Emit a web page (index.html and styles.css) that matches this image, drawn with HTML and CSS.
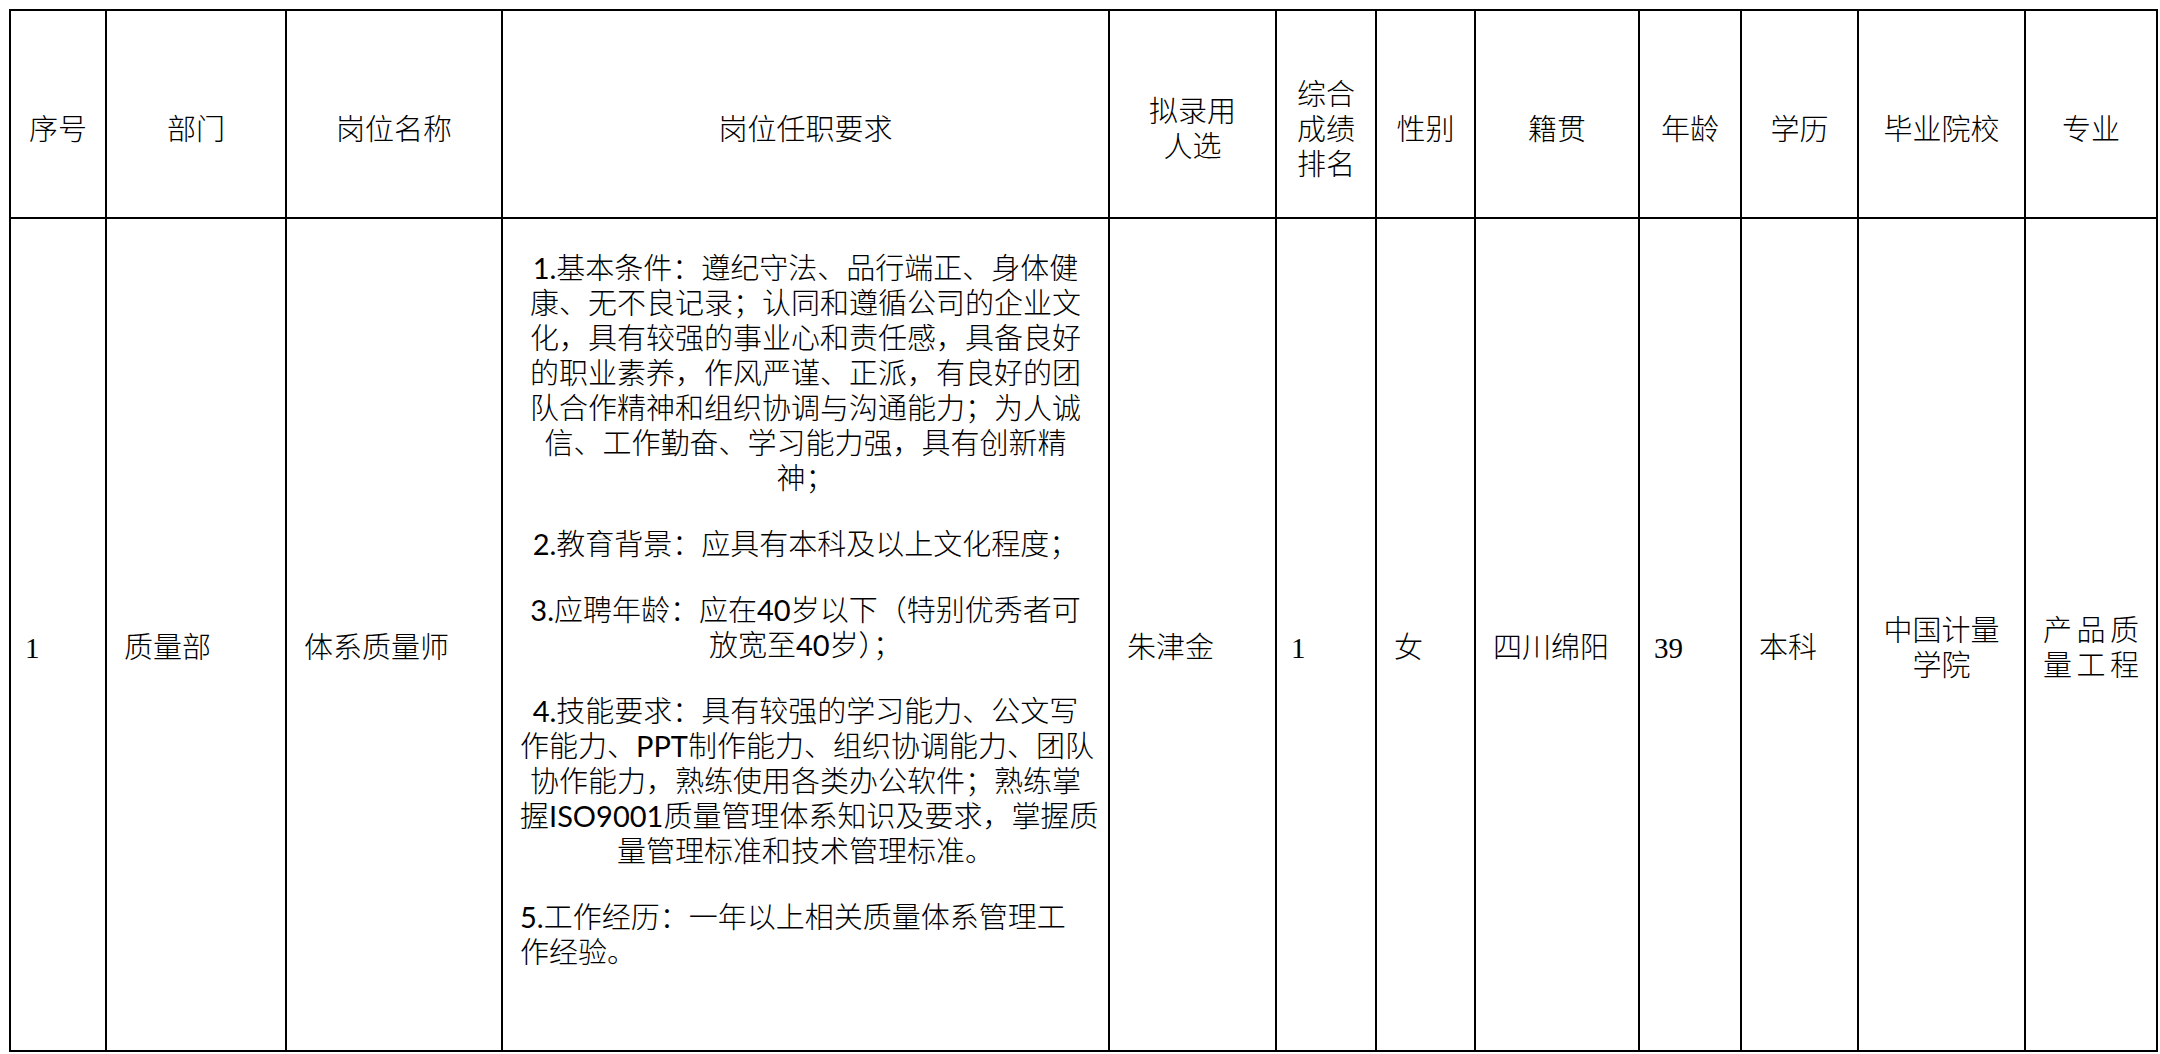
FILE: index.html
```html
<!DOCTYPE html>
<html lang="zh-CN">
<head>
<meta charset="utf-8">
<title>拟录用人员公示</title>
<link rel="stylesheet" href="styles.css">
</head>
<body>
<table class="sheet">
  <colgroup>
    <col class="c-no">
    <col class="c-dept">
    <col class="c-post">
    <col class="c-req">
    <col class="c-name">
    <col class="c-rank">
    <col class="c-sex">
    <col class="c-home">
    <col class="c-age">
    <col class="c-edu">
    <col class="c-school">
    <col class="c-major">
  </colgroup>
  <thead>
    <tr class="head-row">
      <th>序号</th>
      <th>部门</th>
      <th>岗位名称</th>
      <th>岗位任职要求</th>
      <th>拟录用<br>人选</th>
      <th>综合成绩排名</th>
      <th>性别</th>
      <th>籍贯</th>
      <th>年龄</th>
      <th>学历</th>
      <th>毕业院校</th>
      <th>专业</th>
    </tr>
  </thead>
  <tbody>
    <tr class="body-row">
      <td><span class="num">1</span></td>
      <td>质量部</td>
      <td>体系质量师</td>
      <td class="req">
        <p class="para center"><span class="lat">1.</span>基本条件：遵纪守法、品行端正、身体健<br>康、无不良记录；认同和遵循公司的企业文<br>化，具有较强的事业心和责任感，具备良好<br>的职业素养，作风严谨、正派，有良好的团<br>队合作精神和组织协调与沟通能力；为人诚<br>信、工作勤奋、学习能力强，具有创新精<br>神；</p>
        <p class="para center"><span class="lat">2.</span>教育背景：应具有本科及以上文化程度；</p>
        <p class="para center"><span class="lat">3.</span>应聘年龄：应在<span class="lat">40</span>岁以下（特别优秀者可<br>放宽至<span class="lat">40</span>岁）；</p>
        <p class="para center"><span class="lat">4.</span>技能要求：具有较强的学习能力、公文写<br>作能力、<span class="lat">PPT</span>制作能力、组织协调能力、团队<br>协作能力，熟练使用各类办公软件；熟练掌<br>握<span class="lat">ISO9001</span>质量管理体系知识及要求，掌握质<br>量管理标准和技术管理标准。</p>
        <p class="para left"><span class="lat">5.</span>工作经历：一年以上相关质量体系管理工<br>作经验。</p>
      </td>
      <td>朱津金</td>
      <td><span class="num">1</span></td>
      <td>女</td>
      <td>四川绵阳</td>
      <td><span class="num">39</span></td>
      <td>本科</td>
      <td class="mid">中国计量学院</td>
      <td class="spread">产品质量工程</td>
    </tr>
  </tbody>
</table>
</body>
</html>
```

FILE: styles.css
```css
html, body {
  margin: 0;
  padding: 0;
  background: #ffffff;
}

body {
  padding: 9px 0 0 9px;
  font-family: "Liberation Serif", "Noto Sans CJK SC", serif;
  color: #000000;
}

.sheet {
  border-collapse: collapse;
  table-layout: fixed;
  width: 2147px;
  font-size: 29px;
  line-height: 35px;
  font-weight: 300;
}

.c-no { width: 96px; }
.c-dept { width: 180px; }
.c-post { width: 216px; }
.c-req { width: 607px; }
.c-name { width: 167px; }
.c-rank { width: 100px; }
.c-sex { width: 99px; }
.c-home { width: 164px; }
.c-age { width: 102px; }
.c-edu { width: 117px; }
.c-school { width: 167px; }
.c-major { width: 132px; }

.sheet th,
.sheet td {
  border: 2px solid #000000;
  padding: 0 17px;
}

.sheet th {
  font-weight: 300;
  text-align: center;
  vertical-align: middle;
  padding-top: 32px;
}

.head-row {
  height: 208px;
}

.body-row {
  height: 833px;
}

.body-row td {
  text-align: left;
  vertical-align: middle;
  padding-top: 28px;
}

.body-row td.req {
  vertical-align: top;
  padding-top: 33px;
  padding-left: 17px;
  padding-right: 17px;
}

.para {
  margin: 31px 0 0 0;
  white-space: nowrap;
}

.para:first-child {
  margin-top: 0;
}

.center { text-align: center; }
.left { text-align: left; }

.lat {
  font-family: "Lato", "Noto Sans CJK SC", sans-serif;
  font-weight: 400;
  line-height: 1;
}

.num {
  font-family: "Liberation Serif", serif;
  font-weight: 400;
  line-height: 1;
  margin-left: -3px;
}

.body-row td.mid {
  text-align: center;
}

.body-row td.spread {
  text-align: justify;
  text-align-last: justify;
  text-justify: inter-character;
}
```
